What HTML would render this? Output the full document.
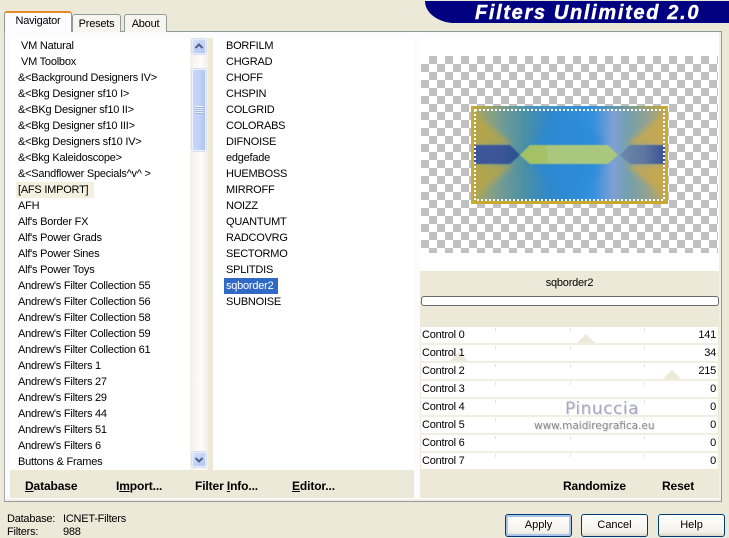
<!DOCTYPE html>
<html><head><meta charset="utf-8"><style>
html,body{margin:0;padding:0;width:729px;height:538px;overflow:hidden;background:#ece9d8}
body{font:11px/16px "Liberation Sans",sans-serif;color:#000;position:relative;letter-spacing:-.23px}
div,span{position:absolute;white-space:nowrap}
.panel{left:4px;top:31px;width:718px;height:471px;background:#fcfcfe;border:1px solid #919b9c;border-left-color:#a0a8a8;box-sizing:border-box;box-shadow:inset -2px -2px 0 #f1efe6}
.tab{background:#f6f5ee;border:1px solid #919b9c;border-bottom:none;border-radius:3px 3px 0 0;text-align:center;box-sizing:border-box;font-size:11px}
.list{background:#fff}
.row{left:0;height:16px}
.bar{background:#ece9d8}
.b{font-weight:bold;font-size:12px;line-height:16px;letter-spacing:-.12px}
.ctl{left:421px;width:297px;height:16px;background:#fff}
.ctl .l{left:1px;top:0;font-size:11px;z-index:2}
.ctl .v{right:2px;top:0;font-size:11px;z-index:2}
.tick{width:1px;height:3px;background:#e5e3d6;top:1px}
.th{width:0;height:0;border-left:9px solid transparent;border-right:9px solid transparent;border-bottom:9px solid #ece9d8;top:7px}
.btn{top:514px;height:23px;box-sizing:border-box;border:1px solid #003c74;border-radius:3px;background:linear-gradient(#fff,#f3f2ea 80%,#dcd8c8);text-align:center;line-height:21px;font-size:11px;letter-spacing:0}
</style></head><body>
<div style="left:425px;top:1px;width:304px;height:22px;background:#000080;border-radius:0 0 0 30px/0 0 0 22px"></div>
<div style="left:475px;top:1px;font:italic bold 20px/24px 'Liberation Sans',sans-serif;color:#fff;letter-spacing:1.67px;-webkit-text-stroke:.4px #fff">Filters Unlimited 2.0</div>

<div class="panel"></div>
<div class="tab" style="left:72px;top:14px;width:49px;height:18px;line-height:18px">Presets</div>
<div class="tab" style="left:124px;top:14px;width:43px;height:18px;line-height:18px">About</div>
<div class="tab" style="left:4px;top:11px;width:68px;height:21px;background:#fcfcfe;border-top:2px solid #e68b2c;border-bottom:none;line-height:17px">Navigator</div>

<div class="list" style="left:10px;top:38px;width:180px;height:432px;overflow:hidden">
<div class="row" style="left:11px;top:0">VM Natural</div>
<div class="row" style="left:11px;top:16px">VM Toolbox</div>
<div class="row" style="left:8px;top:32px">&amp;&lt;Background Designers IV&gt;</div>
<div class="row" style="left:8px;top:48px">&amp;&lt;Bkg Designer sf10 I&gt;</div>
<div class="row" style="left:8px;top:64px">&amp;&lt;BKg Designer sf10 II&gt;</div>
<div class="row" style="left:8px;top:80px">&amp;&lt;Bkg Designer sf10 III&gt;</div>
<div class="row" style="left:8px;top:96px">&amp;&lt;Bkg Designers sf10 IV&gt;</div>
<div class="row" style="left:8px;top:112px">&amp;&lt;Bkg Kaleidoscope&gt;</div>
<div class="row" style="left:8px;top:128px">&amp;&lt;Sandflower Specials^v^ &gt;</div>
<div style="left:6px;top:144px;width:78px;height:16px;background:#f3f0df"></div>
<div class="row" style="left:8px;top:144px">[AFS IMPORT]</div>
<div class="row" style="left:8px;top:160px">AFH</div>
<div class="row" style="left:8px;top:176px">Alf's Border FX</div>
<div class="row" style="left:8px;top:192px">Alf's Power Grads</div>
<div class="row" style="left:8px;top:208px">Alf's Power Sines</div>
<div class="row" style="left:8px;top:224px">Alf's Power Toys</div>
<div class="row" style="left:8px;top:240px">Andrew's Filter Collection 55</div>
<div class="row" style="left:8px;top:256px">Andrew's Filter Collection 56</div>
<div class="row" style="left:8px;top:272px">Andrew's Filter Collection 58</div>
<div class="row" style="left:8px;top:288px">Andrew's Filter Collection 59</div>
<div class="row" style="left:8px;top:304px">Andrew's Filter Collection 61</div>
<div class="row" style="left:8px;top:320px">Andrew's Filters 1</div>
<div class="row" style="left:8px;top:336px">Andrew's Filters 27</div>
<div class="row" style="left:8px;top:352px">Andrew's Filters 29</div>
<div class="row" style="left:8px;top:368px">Andrew's Filters 44</div>
<div class="row" style="left:8px;top:384px">Andrew's Filters 51</div>
<div class="row" style="left:8px;top:400px">Andrew's Filters 6</div>
<div class="row" style="left:8px;top:416px">Buttons &amp; Frames</div>
</div>

<div style="left:190px;top:38px;width:18px;height:432px;background:linear-gradient(90deg,#f3f1ec,#fdfdfa 60%,#f1efe8)"></div>
<div style="left:208px;top:38px;width:5px;height:432px;background:#ece9d8"></div>
<div style="left:192px;top:39px;width:14px;height:15px;background:linear-gradient(135deg,#d6e2fb,#b0c4f3);border:1px solid #e6edfc;box-shadow:0 0 0 1px #d6def0;border-radius:2px;box-sizing:border-box"></div>
<svg style="position:absolute;left:192px;top:39px" width="14" height="15"><path d="M3.5 9 L7 5.5 L10.500 9" fill="none" stroke="#4d6185" stroke-width="2"/></svg>
<div style="left:192px;top:69px;width:14px;height:82px;background:linear-gradient(90deg,#c9d8f9,#bfd0f6 60%,#afc3f0);border:1px solid #eef2fc;box-shadow:0 0 0 1px #d6def0;border-radius:2px;box-sizing:border-box"></div>
<div style="left:195px;top:106px;width:8px;height:8px;background:repeating-linear-gradient(#eef3fd 0 1px,#9db2e2 1px 2px)"></div>
<div style="left:192px;top:452px;width:14px;height:15px;background:linear-gradient(135deg,#d6e2fb,#b0c4f3);border:1px solid #e6edfc;box-shadow:0 0 0 1px #d6def0;border-radius:2px;box-sizing:border-box"></div>
<svg style="position:absolute;left:192px;top:452px" width="14" height="15"><path d="M3.5 6 L7 9.500 L10.500 6" fill="none" stroke="#4d6185" stroke-width="2"/></svg>

<div class="list" style="left:213px;top:38px;width:201px;height:432px"></div>
<div class="row" style="left:226px;top:38px">BORFILM</div>
<div class="row" style="left:226px;top:54px">CHGRAD</div>
<div class="row" style="left:226px;top:70px">CHOFF</div>
<div class="row" style="left:226px;top:86px">CHSPIN</div>
<div class="row" style="left:226px;top:102px">COLGRID</div>
<div class="row" style="left:226px;top:118px">COLORABS</div>
<div class="row" style="left:226px;top:134px">DIFNOISE</div>
<div class="row" style="left:226px;top:150px">edgefade</div>
<div class="row" style="left:226px;top:166px">HUEMBOSS</div>
<div class="row" style="left:226px;top:182px">MIRROFF</div>
<div class="row" style="left:226px;top:198px">NOIZZ</div>
<div class="row" style="left:226px;top:214px">QUANTUMT</div>
<div class="row" style="left:226px;top:230px">RADCOVRG</div>
<div class="row" style="left:226px;top:246px">SECTORMO</div>
<div class="row" style="left:226px;top:262px">SPLITDIS</div>
<div style="left:224px;top:278px;width:54px;height:16px;background:#316ac5"></div>
<div class="row" style="left:226px;top:278px;color:#fff">sqborder2</div>
<div class="row" style="left:226px;top:294px">SUBNOISE</div>

<div class="bar" style="left:10px;top:470px;width:404px;height:28px"></div>
<div class="b" style="left:25px;top:478px"><u>D</u>atabase</div>
<div class="b" style="left:116px;top:478px">I<u>m</u>port...</div>
<div class="b" style="left:195px;top:478px">Filter <u>I</u>nfo...</div>
<div class="b" style="left:292px;top:478px"><u>E</u>ditor...</div>

<div style="left:420px;top:38px;width:299px;height:233px;background:#fff"></div>
<div style="left:421px;top:56px;width:297px;height:197px;background:conic-gradient(#c0c0c0 25%,#fff 0 50%,#c0c0c0 0 75%,#fff 0) 0 0/16px 16px"></div>
<svg style="position:absolute;left:471px;top:106px" width="197" height="98" viewBox="0 0 197 98">
<defs>
<linearGradient id="g" x1="0" x2="1" y1="0" y2="0">
<stop offset="0" stop-color="#b8a550"/><stop offset=".08" stop-color="#8ea37a"/><stop offset=".17" stop-color="#6c9a98"/><stop offset=".27" stop-color="#4a90a4"/><stop offset=".4" stop-color="#3088cc"/><stop offset=".62" stop-color="#3390dc"/><stop offset=".72" stop-color="#7f9fd6"/><stop offset=".8" stop-color="#74a0ac"/><stop offset=".9" stop-color="#94a290"/><stop offset="1" stop-color="#c4a850"/>
</linearGradient>
<linearGradient id="top" x1="0" x2="1" y1="0" y2="0">
<stop offset="0" stop-color="#c9a92e"/><stop offset=".12" stop-color="#8f9f70"/><stop offset=".3" stop-color="#4c94b8"/><stop offset=".6" stop-color="#2f8fe0"/><stop offset=".85" stop-color="#8f9f80"/><stop offset="1" stop-color="#c9a92e"/>
</linearGradient>
<linearGradient id="g2" x1="0" x2="1" y1="0" y2="0"><stop offset="0" stop-color="#40589c"/><stop offset=".6" stop-color="#3a5598"/><stop offset="1" stop-color="#2c5090"/></linearGradient>
<linearGradient id="g3" x1="0" x2="1" y1="0" y2="0"><stop offset="0" stop-color="#6a88a8"/><stop offset=".5" stop-color="#5f769f"/><stop offset="1" stop-color="#334f98"/></linearGradient>
<filter id="bl" x="-10%" y="-10%" width="120%" height="120%"><feGaussianBlur stdDeviation="3"/></filter>
<filter id="bs"><feGaussianBlur stdDeviation=".6"/></filter>
</defs>
<rect width="197" height="98" fill="url(#g)"/>
<g filter="url(#bl)">
<path d="M60 36 L94 4 L132 32 L132 66 L94 94 L60 60Z" fill="#2b88d8" opacity=".4"/>
<path d="M3 6 L42 39 H3Z" fill="#bba640" opacity=".75"/>
<path d="M3 92 L42 59 H3Z" fill="#bba640" opacity=".75"/>
<path d="M194 6 L155 39 H194Z" fill="#c8a84e" opacity=".85"/>
<path d="M194 92 L155 59 H194Z" fill="#c8a84e" opacity=".85"/>
</g>
<g filter="url(#bs)">
<path d="M0 39 H39 L49 49 L39 58 H0Z" fill="url(#g2)"/>
<path d="M197 39 H159 L149 49 L159 58 H197Z" fill="url(#g3)"/>
<path d="M59 39 H137 L147 49 L137 58 H59 L49 49Z" fill="#a9c87e"/>
<path d="M59 39 L49 49 L59 58 H76 V39Z" fill="#a4bd5e" opacity=".7"/>
</g>
<rect x="0" y="0" width="197" height="3" fill="url(#top)"/>
<rect x="0" y="95" width="197" height="3" fill="#c9a92e"/>
<rect x="0" y="0" width="3" height="98" fill="#c9a92e"/>
<rect x="194" y="0" width="3" height="98" fill="#c9a92e"/>
<rect x="4" y="4" width="189" height="90" fill="none" stroke="#fff" stroke-width="2" stroke-dasharray="2 2"/>
</svg>

<div class="bar" style="left:420px;top:271px;width:299px;height:56px"></div>
<div style="left:420px;top:275px;width:299px;text-align:center;font-size:11px">sqborder2</div>
<div style="left:421px;top:296px;width:298px;height:10px;box-sizing:border-box;background:#fff;border:1px solid #6b6b6b;border-radius:3px"></div>

<div class="ctl" style="top:327px"><div class="l">Control 0</div><div class="v">141</div><div class="tick" style="left:74px"></div><div class="tick" style="left:149px"></div><div class="tick" style="left:223px"></div><div class="th" style="left:156px"></div></div>
<div class="ctl" style="top:345px"><div class="l">Control 1</div><div class="v">34</div><div class="tick" style="left:74px"></div><div class="tick" style="left:149px"></div><div class="tick" style="left:223px"></div><div class="th" style="left:29px"></div></div>
<div class="ctl" style="top:363px"><div class="l">Control 2</div><div class="v">215</div><div class="tick" style="left:74px"></div><div class="tick" style="left:149px"></div><div class="tick" style="left:223px"></div><div class="th" style="left:242px"></div></div>
<div class="ctl" style="top:381px"><div class="l">Control 3</div><div class="v">0</div><div class="tick" style="left:74px"></div><div class="tick" style="left:149px"></div><div class="tick" style="left:223px"></div></div>
<div class="ctl" style="top:399px"><div class="l">Control 4</div><div class="v">0</div><div class="tick" style="left:74px"></div><div class="tick" style="left:149px"></div><div class="tick" style="left:223px"></div></div>
<div class="ctl" style="top:417px"><div class="l">Control 5</div><div class="v">0</div><div class="tick" style="left:74px"></div><div class="tick" style="left:149px"></div><div class="tick" style="left:223px"></div></div>
<div class="ctl" style="top:435px"><div class="l">Control 6</div><div class="v">0</div><div class="tick" style="left:74px"></div><div class="tick" style="left:149px"></div><div class="tick" style="left:223px"></div></div>
<div class="ctl" style="top:453px;height:16px"><div class="l">Control 7</div><div class="v">0</div><div class="tick" style="left:74px"></div><div class="tick" style="left:149px"></div><div class="tick" style="left:223px"></div></div>
<div style="left:420px;top:327px;width:1px;height:143px;background:#ece9d8"></div>
<div style="left:718px;top:327px;width:1px;height:143px;background:#ece9d8"></div>
<div style="left:420px;top:325px;width:299px;height:2px;background:#ece9d8"></div>
<div style="left:420px;top:343px;width:299px;height:2px;background:#f1efe3"></div>
<div style="left:420px;top:361px;width:299px;height:2px;background:#f1efe3"></div>
<div style="left:420px;top:379px;width:299px;height:2px;background:#f1efe3"></div>
<div style="left:420px;top:397px;width:299px;height:2px;background:#f1efe3"></div>
<div style="left:420px;top:415px;width:299px;height:2px;background:#f1efe3"></div>
<div style="left:420px;top:433px;width:299px;height:2px;background:#f1efe3"></div>
<div style="left:420px;top:451px;width:299px;height:2px;background:#f1efe3"></div>

<div style="left:565px;top:399px;font:normal 17px/20px 'DejaVu Sans',sans-serif;color:#a7a9c4;letter-spacing:.5px;text-shadow:1px 1px 0 #e5e5e5">Pinuccia</div>
<div style="left:534px;top:419px;font:10.500px/14px 'DejaVu Sans',sans-serif;color:#888;letter-spacing:0;text-shadow:1px 1px 0 #e5e5e5">www.maidiregrafica.eu</div>

<div class="bar" style="left:420px;top:469px;width:299px;height:29px"></div>
<div class="b" style="left:563px;top:478px">Randomize</div>
<div class="b" style="left:662px;top:478px">Reset</div>

<div style="left:7px;top:513px;font-size:11px;line-height:13px">Database:</div>
<div style="left:63px;top:513px;font-size:11px;line-height:13px">ICNET-Filters</div>
<div style="left:7px;top:526px;font-size:11px;line-height:13px">Filters:</div>
<div style="left:63px;top:526px;font-size:11px;line-height:13px">988</div>

<div class="btn" style="left:505px;width:67px;box-shadow:inset 0 0 0 2px #a9c3ea">Apply</div>
<div class="btn" style="left:581px;width:67px">Cancel</div>
<div class="btn" style="left:658px;width:67px">Help</div>
</body></html>
